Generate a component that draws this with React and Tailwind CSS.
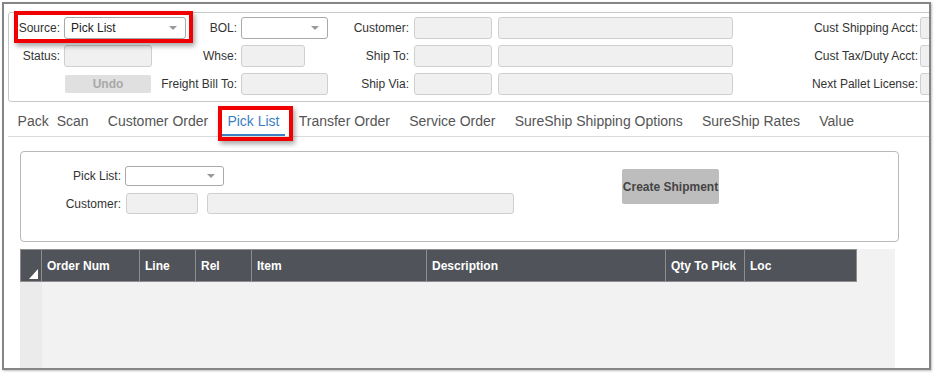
import React from "react";

const labelCls = "flex items-center justify-end text-[12px] text-[#333] whitespace-nowrap";

function Select({ value, className }) {
  return (
    <div className={`flex items-center justify-between bg-white border border-[#a9a9a9] rounded-[3px] pl-[6px] pr-[8px] text-[12px] text-[#222] ${className}`}>
      <span>{value}</span>
      <span className="w-0 h-0 border-x-[4px] border-t-[4px] border-x-transparent border-t-[#9a9a9a]" />
    </div>
  );
}

function Field({ className }) {
  return <div className={`bg-[#f0f0f0] border border-[#cfcfcf] rounded-[3px] ${className}`} />;
}

const tabs = ["Customer Order", "Pick List", "Transfer Order", "Service Order", "SureShip Shipping Options", "SureShip Rates", "Value"];

const columns = [
  { name: "Order Num", w: "w-[98px]" },
  { name: "Line", w: "w-[56px]" },
  { name: "Rel", w: "w-[56px]" },
  { name: "Item", w: "w-[175px]" },
  { name: "Description", w: "w-[239px]" },
  { name: "Qty To Pick", w: "w-[79px]" },
  { name: "Loc", w: "w-[112px]" },
];

export default function App() {
  return (
    <div className="relative w-[937px] h-[378px] bg-white font-['Liberation_Sans',Arial,sans-serif] overflow-hidden">
      {/* Frame */}
      <div className="ml-[2px] mt-[2px] w-[929px] h-[368px] border-2 border-[#858585] overflow-hidden shadow-[1px_1px_2px_rgba(0,0,0,0.25)]">
        {/* Header panel */}
        <div className="ml-[4px] mt-[8px] w-[960px] h-[90px] border border-[#c8c8c8] rounded-[3px] pt-[4px]">
          <div className="grid grid-cols-[51px_130px_47px_93px_79px_324px_185px_1fr] grid-rows-[22px_22px_22px] gap-y-[6px]">
            <div className={labelCls}>Source:</div>
            <div className="pl-[4px]"><Select value="Pick List" className="w-[122px] h-[22px]" /></div>
            <div className={labelCls}>BOL:</div>
            <div className="pl-[4px]"><Select value="" className="w-[87px] h-[22px]" /></div>
            <div className={labelCls}>Customer:</div>
            <div className="pl-[5px] flex gap-[6px]"><Field className="w-[78px] h-[22px]" /><Field className="w-[235px] h-[22px]" /></div>
            <div className={labelCls}>Cust Shipping Acct:</div>
            <div className="pl-[2px]"><Field className="w-[40px] h-[22px]" /></div>

            <div className={labelCls}>Status:</div>
            <div className="pl-[4px]"><Field className="w-[88px] h-[22px]" /></div>
            <div className={labelCls}>Whse:</div>
            <div className="pl-[4px]"><Field className="w-[64px] h-[22px]" /></div>
            <div className={labelCls}>Ship To:</div>
            <div className="pl-[5px] flex gap-[6px]"><Field className="w-[78px] h-[22px]" /><Field className="w-[235px] h-[22px]" /></div>
            <div className={labelCls}>Cust Tax/Duty Acct:</div>
            <div className="pl-[2px]"><Field className="w-[40px] h-[22px]" /></div>

            <div />
            <div className="pl-[5px] flex items-center">
              <button className="w-[86px] h-[18px] bg-[#e0e0e0] rounded-[2px] text-[12px] font-bold text-[#a8a8a8]">Undo</button>
            </div>
            <div className={`${labelCls} -ml-[40px]`}>Freight Bill To:</div>
            <div className="pl-[4px]"><Field className="w-[87px] h-[22px]" /></div>
            <div className={labelCls}>Ship Via:</div>
            <div className="pl-[5px] flex gap-[6px]"><Field className="w-[78px] h-[22px]" /><Field className="w-[235px] h-[22px]" /></div>
            <div className={labelCls}>Next Pallet License:</div>
            <div className="pl-[2px]"><Field className="w-[40px] h-[22px]" /></div>
          </div>
        </div>

        {/* Tabs */}
        <div className="ml-[4px] mt-[5px] w-[960px] h-[30px] flex border-b border-[#dcdcdc] text-[14px] text-[#555]">
          <div className="flex items-center px-[9.6px] h-[29px]">
            <span>Pack</span>
            <span className="ml-[8px]">Scan</span>
          </div>
          {tabs.map((t) => (
            <div key={t} className={`relative flex items-center px-[9.6px] h-[29px] ${t === "Pick List" ? "text-[#3a7fc1]" : ""}`}>
              {t}
              {t === "Pick List" && <span className="absolute left-[4px] right-[4px] bottom-[0px] h-[2px] bg-[#3a7fc1]" />}
            </div>
          ))}
        </div>

        {/* Pick list panel */}
        <div className="ml-[16px] mt-[14px] w-[879px] h-[91px] border border-[#b9b9b9] rounded-[4px] flex">
          <div className="w-[601px] pt-[14px] flex flex-col gap-[7px]">
            <div className="flex items-center h-[20px]">
              <div className={`${labelCls} w-[100px]`}>Pick List:</div>
              <Select value="" className="ml-[4px] w-[99px] h-[20px]" />
            </div>
            <div className="flex items-center h-[21px]">
              <div className={`${labelCls} w-[100px]`}>Customer:</div>
              <Field className="ml-[5px] w-[72px] h-[21px]" />
              <Field className="ml-[9px] w-[307px] h-[21px]" />
            </div>
          </div>
          <button className="mt-[17px] w-[97px] h-[35px] bg-[#bdbdbd] rounded-[2px] text-[12px] font-bold text-[#444]">Create Shipment</button>
        </div>

        {/* Grid */}
        <div className="ml-[16px] mt-[7px] w-[875px] h-[130px] bg-[#f2f2f2] flex flex-col">
          <div className="flex h-[33px]">
            <div className="w-[22px] h-full bg-[#50535a] border border-[#8e8e8e] flex items-end justify-end pr-[3px] pb-[2px]">
              <svg width="9" height="10" viewBox="0 0 9 10"><polygon points="9,0 9,10 0,10" fill="#fff" /></svg>
            </div>
            {columns.map((c) => (
              <div key={c.name} className={`${c.w} h-full bg-[#50535a] border-y border-r border-[#8e8e8e] flex items-center pl-[5px] text-[12px] font-bold text-white`}>
                {c.name}
              </div>
            ))}
          </div>
          <div className="flex flex-1">
            <div className="w-[22px] bg-[#ebebeb]" />
          </div>
        </div>
      </div>

      {/* Annotation highlights */}
      <div className="absolute left-[14px] top-[11px] w-[179px] h-[32px] border-4 border-[#f00000] shadow-[2px_3px_5px_rgba(0,0,0,0.35)]" />
      <div className="absolute left-[218px] top-[106px] w-[75px] h-[35px] border-4 border-[#f00000] shadow-[2px_3px_5px_rgba(0,0,0,0.35)]" />
    </div>
  );
}
